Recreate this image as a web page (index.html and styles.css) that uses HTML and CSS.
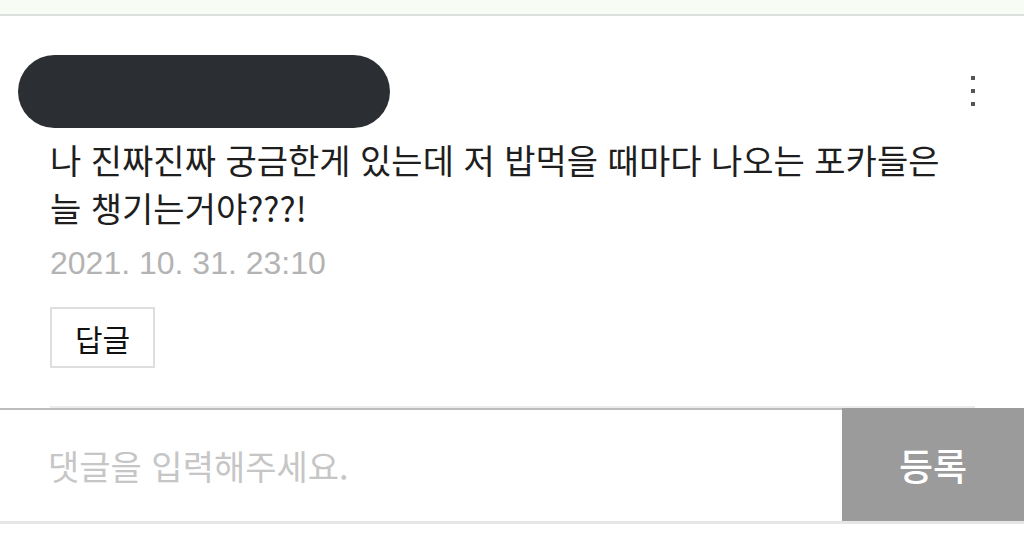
FILE: index.html
```html
<!DOCTYPE html>
<html lang="ko">
<head>
  <meta charset="UTF-8" />
  <meta name="viewport" content="width=device-width, initial-scale=1.0"/>
  <title>댓글</title>
  <link rel="stylesheet" href="styles.css">
</head>
<body>
  <div class="topbar"></div>

  <div class="comment">
    <div class="comment-head">
      <div class="nickname"></div>
      <div class="more">
        <span></span><span></span><span></span>
      </div>
    </div>
    <p class="comment-text">나 진짜진짜 궁금한게 있는데 저 밥먹을 때마다 나오는 포카들은<br>늘 챙기는거야???!</p>
    <div class="comment-date">2021. 10. 31. 23:10</div>
    <button class="reply-btn">답글</button>
  </div>

  <div class="divider"></div>

  <form class="write" onsubmit="return false">
    <input type="text" class="write-input" placeholder="댓글을 입력해주세요."/>
    <button class="write-btn">등록</button>
  </form>
</body>
</html>
```

FILE: styles.css
```css
body {
  margin: 0;
  background: #fff;
  font-family: "Noto Sans CJK KR", "Noto Sans", sans-serif;
  color: #222;
}

.topbar {
  height: 14px;
  background: #f7fcf4;
  border-bottom: 2px solid #dcdfdb;
}

.comment {
  padding: 39px 49px 0 50px;
}

.comment-head {
  display: flex;
  justify-content: space-between;
  align-items: flex-start;
  margin-left: -32px;
}

.nickname {
  width: 372px;
  height: 73px;
  border-radius: 37px;
  background: #2b2e32;
}

.more {
  display: flex;
  flex-direction: column;
  gap: 9px;
  padding-top: 21px;
}

.more span {
  width: 4px;
  height: 4px;
  background: #555;
}

.comment-text {
  margin: 8px 0 0;
  font-size: 34px;
  line-height: 48px;
  color: #1e1e1e;
}

.comment-date {
  margin-top: 13px;
  font-family: "Liberation Sans", "Noto Sans", sans-serif;
  font-size: 32px;
  line-height: 36px;
  color: #b3b3b3;
}

.reply-btn {
  display: block;
  margin-top: 26px;
  width: 105px;
  height: 61px;
  padding: 0;
  background: #fff;
  border: 2px solid #dedede;
  font-family: inherit;
  font-size: 30px;
  color: #111;
}

.divider {
  margin: 38px 49px 0 50px;
  height: 2px;
  background: #ececec;
}

.write {
  display: flex;
  height: 111px;
  border-top: 2px solid #bdbdbd;
  border-bottom: 3px solid #e6e6e6;
}

.write-input {
  flex: 1;
  border: none;
  outline: none;
  padding: 0 0 0 48px;
  font-family: inherit;
  font-size: 34px;
  color: #222;
  background: #fff;
}

.write-input::placeholder {
  color: #c6c6c6;
}

.write-btn {
  width: 182px;
  border: none;
  margin-top: -2px;
  background: #9b9b9b;
  color: #fff;
  font-family: inherit;
  font-size: 37px;
  font-weight: 500;
}
```
